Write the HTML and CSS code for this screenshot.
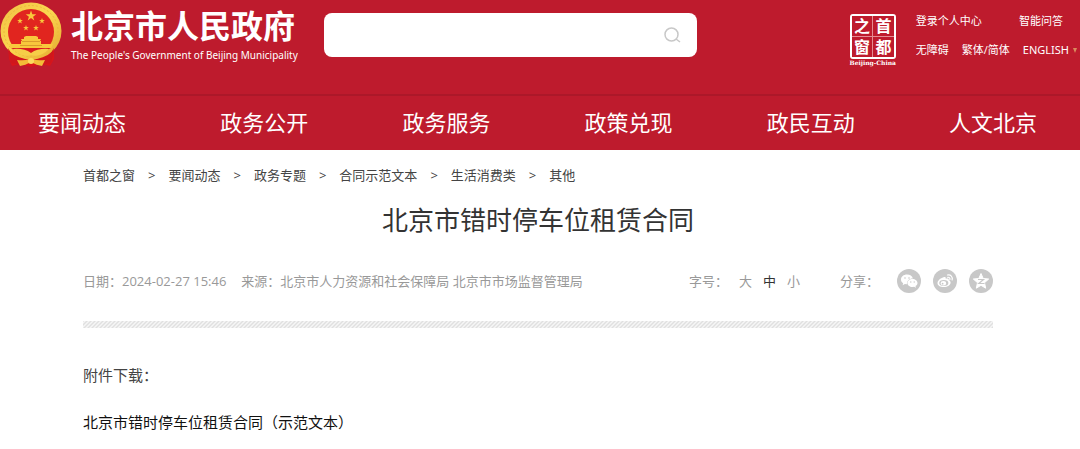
FILE: index.html
```html
<!DOCTYPE html>
<html lang="zh-CN">
<head>
  <meta charset="utf-8">
  <title>北京市错时停车位租赁合同</title>
  <link rel="stylesheet" href="styles.css">
</head>
<body>
  <header class="header">
    <div class="header-top">
      <a class="logo" href="#">
        <svg class="emblem" viewBox="0 0 62 66" aria-hidden="true">
          <defs>
            <linearGradient id="gold" x1="0" y1="0" x2="1" y2="1">
              <stop offset="0" stop-color="#f0c044"/>
              <stop offset="0.5" stop-color="#fbd750"/>
              <stop offset="1" stop-color="#e2a52e"/>
            </linearGradient>
            <path id="star" d="M0-5 1.2-1.6 4.8-1.6 1.9.6 3 4 0 1.9-3 4-1.9.6-4.8-1.6-1.2-1.6z"/>
          </defs>
          <path d="M8 44 9 57 12 64 20 62 31 65 42 62 50 64 54 57 54 44z" fill="#d9151b"/>
          <ellipse cx="31" cy="29" rx="30.500" ry="28.500" fill="url(#gold)"/>
          <ellipse cx="31" cy="29" rx="27" ry="25.500" fill="none" stroke="#eeb83c" stroke-width="1" stroke-dasharray="2 2"/>
          <circle cx="31" cy="30" r="23" fill="#e1251f"/>
          <g fill="#f8c83c">
            <use href="#star" transform="translate(31 14) scale(1.1)"/>
            <use href="#star" transform="translate(20 19) scale(.6)"/>
            <use href="#star" transform="translate(42 19) scale(.6)"/>
            <use href="#star" transform="translate(26 26) scale(.6)"/>
            <use href="#star" transform="translate(36 26) scale(.6)"/>
            <path d="M24 35 26 34H36L38 35V37H41L40 39H22L21 37H24z"/>
            <path d="M21 39H41V42H53L51 46H11L9 42H21z"/>
          </g>
          <path d="M22 39.500H40M20 43.500H42" stroke="#dc9d2b" stroke-width="1"/>
          <path d="M11 46H51L45 49Q38 48 31 51 24 48 17 49z" fill="#d91c1d"/>
          <path d="M13 47Q24 46 31 51 38 46 49 47 40 56 31 53 22 56 13 47z" fill="#f6cd48"/>
          <path d="M8 46Q14 58 25 57L21 63 11 61zM54 46Q48 58 37 57L41 63 51 61z" fill="#cf171c"/>
          <path d="M17 58Q25 59 29 57H33Q37 59 45 58L42 64Q36 63 33 61H29Q26 63 20 64z" fill="#f3bd38"/>
          <circle cx="31" cy="59" r="3" fill="#fbdc60"/>
        </svg>
        <span class="logo-text">
          <span class="logo-name">北京市人民政府</span>
          <span class="logo-en">The People's Government of Beijing Municipality</span>
        </span>
      </a>

      <form class="search" role="search">
        <input class="search-input" type="text" aria-label="搜索">
        <button class="search-button" type="button" aria-label="搜索">
          <svg viewBox="0 0 18 18" width="18" height="18" fill="none" stroke="#c8c8c8" stroke-width="1.500">
            <circle cx="8.500" cy="8.500" r="6.500"/>
            <path d="M13 13 17 16"/>
          </svg>
        </button>
      </form>

      <div class="header-side">
        <a class="seal" href="#">
          <span class="seal-box">
            <span>之</span><span>首</span><span>窗</span><span>都</span>
          </span>
          <span class="seal-en">Beijing-China</span>
        </a>
        <div class="tools">
          <div class="tools-row">
            <a href="#">登录个人中心</a>
            <a class="qa" href="#">智能问答</a>
          </div>
          <div class="tools-row">
            <a href="#">无障碍</a>
            <a href="#">繁体/简体</a>
            <a class="english" href="#">ENGLISH<span class="arrow"></span></a>
          </div>
        </div>
      </div>
    </div>

    <nav class="nav">
      <a href="#">要闻动态</a>
      <a href="#">政务公开</a>
      <a href="#">政务服务</a>
      <a href="#">政策兑现</a>
      <a href="#">政民互动</a>
      <a href="#">人文北京</a>
    </nav>
  </header>

  <main class="content">
    <div class="breadcrumb">
      <a href="#">首都之窗</a>
      <span>&gt;</span>
      <a href="#">要闻动态</a>
      <span>&gt;</span>
      <a href="#">政务专题</a>
      <span>&gt;</span>
      <a href="#">合同示范文本</a>
      <span>&gt;</span>
      <a href="#">生活消费类</a>
      <span>&gt;</span>
      <a href="#">其他</a>
    </div>

    <h1 class="title">北京市错时停车位租赁合同</h1>

    <div class="meta">
      <span class="meta-date">日期：2024-02-27 15:46</span>
      <span>来源：北京市人力资源和社会保障局 北京市市场监督管理局</span>
      <div class="font-size">
        <span>字号：</span>
        <button type="button">大</button>
        <button type="button" class="active">中</button>
        <button type="button">小</button>
      </div>
      <div class="share">
        <span>分享：</span>
        <a href="#" aria-label="微信">
          <svg viewBox="0 0 24 24" width="24" height="24">
            <circle cx="12" cy="12" r="12" fill="#c8c8c8"/>
            <path d="M10 5.500c-3.500 0-6 2.200-6 4.900 0 1.600.8 2.900 2.200 3.800l-.6 2 2.300-1.200 2 .3C9.700 11.500 12.500 9.200 15.900 9.400 15.300 7 13 5.500 10 5.500z" fill="#fff"/>
            <path d="M15.500 10c-2.900 0-5.100 1.800-5.100 4s2.200 4 5.100 4l1.600-.2 1.900 1-.5-1.700c1.300-.8 2-1.900 2-3.100 0-2.200-2.200-4-5-4z" fill="#fff"/>
            <g fill="#c8c8c8">
              <circle cx="8" cy="9" r=".8"/><circle cx="12" cy="9" r=".8"/>
              <circle cx="13.800" cy="13" r=".7"/><circle cx="17.200" cy="13" r=".7"/>
            </g>
          </svg>
        </a>
        <a href="#" aria-label="微博">
          <svg viewBox="0 0 24 24" width="24" height="24">
            <circle cx="12" cy="12" r="12" fill="#c8c8c8"/>
            <path d="M10.500 8.300c1.300-.6 2.600-.4 2.200 1.500 2-.8 3.500-.4 3 1.400 1.200.4 1.900 1.200 1.900 2.300 0 2.400-3 4.500-6.800 4.500S4.500 16.500 4.500 14c0-2.100 3-4.900 6-5.700z" fill="#fff"/>
            <ellipse cx="10.800" cy="14" rx="4.600" ry="2.900" fill="#c8c8c8"/>
            <ellipse cx="10.400" cy="14.200" rx="2.700" ry="2.200" fill="#fff"/>
            <circle cx="9.600" cy="14.700" r=".9" fill="#c8c8c8"/>
            <path d="M14.500 6c3.200-.7 5.500 1.800 4.600 5M14.800 8.300c1.500-.2 2.500.8 2.100 2.300" fill="none" stroke="#fff" stroke-width="1.200" stroke-linecap="round"/>
          </svg>
        </a>
        <a href="#" aria-label="QQ空间">
          <svg viewBox="0 0 24 24" width="24" height="24">
            <circle cx="12" cy="12" r="12" fill="#c8c8c8"/>
            <path d="M12 4.500 14.200 9.500 19.700 10 15.500 13.700 16.700 19.200 12 16.300 7.300 19.200 8.500 13.700 4.300 10 9.800 9.500z" fill="#fff" stroke="#fff" stroke-linejoin="round"/>
            <path d="M9 10.500H14.500L9.800 14.500H15.500" fill="none" stroke="#c8c8c8" stroke-width="1.200"/>
          </svg>
        </a>
      </div>
    </div>

    <div class="divider"></div>

    <p class="download-label">附件下载：</p>
    <p class="download"><a href="#">北京市错时停车位租赁合同（示范文本）</a></p>
  </main>
</body>
</html>
```
FILE: styles.css
```css
* {
  box-sizing: border-box;
}

body {
  margin: 0;
  background-color: #ffffff;
  color: #444444;
  font-family: "Open Sans", "Noto Sans CJK SC", sans-serif;
}

a {
  color: inherit;
  text-decoration: none;
}

.header {
  background-color: #be1b2d;
  color: #ffffff;
}

.header-top {
  display: flex;
  align-items: flex-start;
  height: 94px;
}

.logo {
  display: flex;
  gap: 9px;
  flex: none;
  width: 324px;
  padding-top: 2px;
}

.emblem {
  width: 62px;
  height: 66px;
}

.logo-text {
  display: flex;
  flex-direction: column;
  padding-top: 7px;
}

.logo-name {
  font-size: 32px;
  font-weight: bold;
  line-height: 34px;
}

.logo-en {
  font-family: "Noto Sans", sans-serif;
  font-size: 10px;
  line-height: 24px;
  white-space: nowrap;
}

.search {
  display: flex;
  flex: 0 1 373px;
  height: 44px;
  margin-top: 13px;
  background-color: #ffffff;
  border-radius: 8px;
}

.search-input {
  flex: 1;
  min-width: 0;
  padding: 0 12px;
  border: none;
  background: none;
  font-size: 16px;
  outline: none;
}

.search-button {
  display: flex;
  align-items: center;
  padding: 0 16px;
  border: none;
  background: none;
  cursor: pointer;
}

.header-side {
  display: flex;
  gap: 18px;
  margin-left: auto;
  padding: 10px 3px 0 0;
}

.seal {
  display: flex;
  flex-direction: column;
  align-items: center;
  width: 50px;
  padding-top: 4px;
}

.seal-box {
  display: grid;
  grid-template-columns: 1fr 1fr;
  gap: 1px;
  width: 46px;
  height: 45px;
  border: 2px solid #ffffff;
  border-radius: 3px;
  background-color: #e58b93;
}

.seal-box span {
  background-color: #be1b2d;
  font-size: 16px;
  font-weight: bold;
  line-height: 20px;
  text-align: center;
}

.seal-en {
  font-family: "DejaVu Serif", serif;
  font-size: 6px;
  font-weight: bold;
  line-height: 8px;
  white-space: nowrap;
}

.tools {
  font-size: 11px;
  line-height: 22px;
}

.tools-row {
  display: flex;
  gap: 13px;
  margin-bottom: 7px;
  white-space: nowrap;
}

.qa {
  margin-left: auto;
  padding-right: 14px;
}

.english {
  display: flex;
  align-items: center;
  gap: 4px;
  font-family: "Noto Sans", sans-serif;
}

.arrow {
  border: 2px solid transparent;
  border-top: 5px solid #d98a5c;
  border-bottom: none;
}

.nav {
  display: flex;
  justify-content: space-between;
  padding: 0 43px 2px 38px;
  border-top: 2px solid #ac1829;
  font-size: 22px;
  line-height: 52px;
}

.content {
  padding: 15px 87px 12px 83px;
}

.breadcrumb {
  display: flex;
  gap: 13px;
  font-size: 13px;
  line-height: 20px;
}

.title {
  margin: 15px 0 29px;
  color: #333333;
  font-size: 26px;
  font-weight: normal;
  line-height: 40px;
  text-align: center;
}

.meta {
  display: flex;
  align-items: center;
  color: #999999;
  font-size: 13px;
  line-height: 24px;
}

.meta-date {
  margin-right: 15px;
}

.font-size {
  display: flex;
  gap: 11px;
  margin-left: auto;
}

.font-size button {
  padding: 0;
  border: none;
  background: none;
  color: inherit;
  font: inherit;
  cursor: pointer;
}

.font-size .active {
  color: #333333;
}

.share {
  display: flex;
  gap: 12px;
  margin-left: 40px;
}

.share span {
  margin-right: 6px;
}

.share svg {
  display: block;
}

.divider {
  height: 7px;
  margin: 28px 0 35px;
  background: linear-gradient(135deg, #e0e0e0 12%, #f6f6f6 13% 37%, #e0e0e0 38% 62%, #f6f6f6 63% 87%, #e0e0e0 88%);
  background-size: 4px 4px;
}

.download-label,
.download {
  margin: 0;
  font-size: 15px;
  line-height: 24px;
}

.download {
  margin-top: 23px;
  color: #111111;
}
```
